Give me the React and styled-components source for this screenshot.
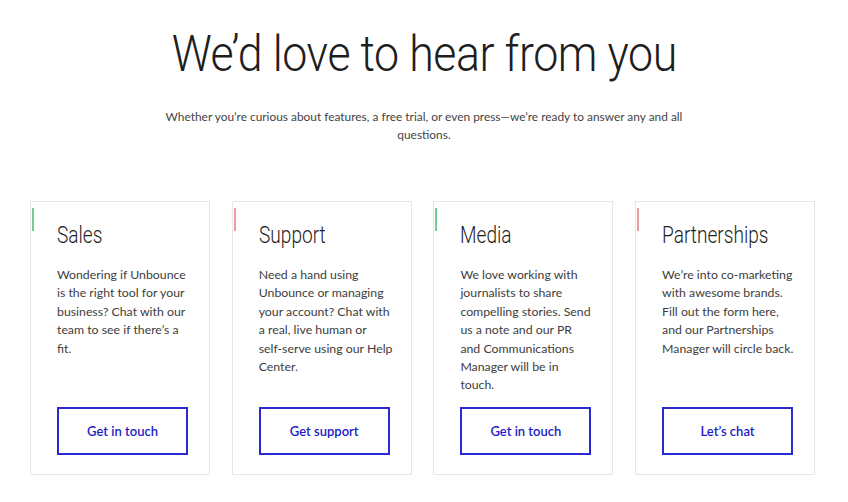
import React from "react";
import styled, { createGlobalStyle } from "styled-components";

const Global = createGlobalStyle`
  html, body { margin: 0; padding: 0; background: #fff; }
  body { font-family: "Lato", "Liberation Sans", sans-serif; color: #3d3d3d; }
  * { box-sizing: border-box; }
`;

const Page = styled.main`
  display: flex;
  flex-direction: column;
  align-items: center;
  padding-top: 24px;
`;

const Heading = styled.h1`
  margin: 0;
  font-family: "Roboto", "Liberation Sans", sans-serif;
  font-weight: 300;
  font-size: 50px;
  line-height: 60px;
  color: #1e1e1e;
  letter-spacing: -0.5px;
  transform: scaleX(0.895);
  white-space: nowrap;
`;

const Lead = styled.p`
  margin: 24px 0 0;
  width: 520px;
  text-align: center;
  font-size: 11.9px;
  line-height: 18px;
  color: #444;
`;

const Grid = styled.section`
  display: grid;
  grid-template-columns: repeat(4, 180px);
  gap: 21.7px;
  margin-top: 57px;
  align-self: flex-start;
  margin-left: 30px;
`;

const Card = styled.article`
  position: relative;
  display: flex;
  flex-direction: column;
  height: 274px;
  border: 1px solid #e6e6e6;
  padding: 20px 20px 19px 26px;
  &::before {
    content: "";
    position: absolute;
    left: 1px;
    top: 6px;
    width: 2px;
    height: 23px;
    background: ${(p) => p.$accent};
  }
`;

const Title = styled.h2`
  margin: 0;
  font-family: "Roboto", "Liberation Sans", sans-serif;
  font-weight: 300;
  font-size: 23px;
  line-height: 28px;
  color: #1e1e1e;
  white-space: nowrap;
  transform: scaleX(0.83);
  transform-origin: left center;
`;

const Body = styled.p`
  margin: 16px 0 0;
  font-size: 12.3px;
  line-height: 18.4px;
  white-space: nowrap;
  color: #3d3d3d;
`;

const Button = styled.a`
  margin-top: auto;
  display: flex;
  align-items: center;
  justify-content: center;
  width: 131px;
  height: 48px;
  border: 2px solid #2a2ad2;
  color: #1c1cc4;
  font-size: 13px;
  font-weight: 600;
  text-decoration: none;
  cursor: pointer;
`;

const GREEN = "#72cc98";
const PINK = "#ef9aa2";

const cards = [
  {
    title: "Sales",
    accent: GREEN,
    body: ["Wondering if Unbounce", "is the right tool for your", "business? Chat with our", "team to see if there\u2019s a", "fit."],
    cta: "Get in touch",
  },
  {
    title: "Support",
    accent: PINK,
    body: ["Need a hand using", "Unbounce or managing", "your account? Chat with", "a real, live human or", "self-serve using our Help", "Center."],
    cta: "Get support",
  },
  {
    title: "Media",
    accent: GREEN,
    body: ["We love working with", "journalists to share", "compelling stories. Send", "us a note and our PR", "and Communications", "Manager will be in", "touch."],
    cta: "Get in touch",
  },
  {
    title: "Partnerships",
    accent: PINK,
    body: ["We\u2019re into co-marketing", "with awesome brands.", "Fill out the form here,", "and our Partnerships", "Manager will circle back."],
    cta: "Let\u2019s chat",
  },
];

export default function App() {
  return (
    <>
      <Global />
      <Page>
        <Heading>We’d love to hear from you</Heading>
        <Lead>
          Whether you’re curious about features, a free trial, or even press—we’re ready to answer any and all questions.
        </Lead>
        <Grid>
          {cards.map((c) => (
            <Card key={c.title} $accent={c.accent}>
              <Title>{c.title}</Title>
              <Body>
                {c.body.map((line, i) => (
                  <React.Fragment key={i}>
                    {line}
                    {i < c.body.length - 1 && <br />}
                  </React.Fragment>
                ))}
              </Body>
              <Button>{c.cta}</Button>
            </Card>
          ))}
        </Grid>
      </Page>
    </>
  );
}
